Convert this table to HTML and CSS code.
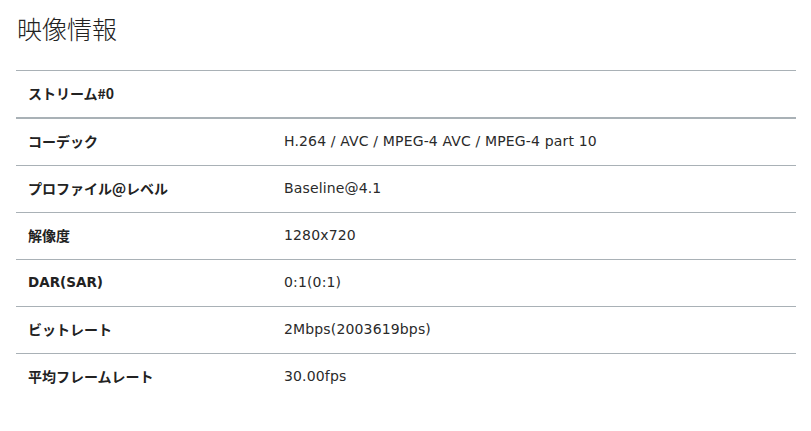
FILE: index.html
```html
<!DOCTYPE html>
<html lang="ja">
<head>
<meta charset="utf-8">
<link rel="stylesheet" href="styles.css">
</head>
<body>
<div class="page">
  <h1 class="title">映像情報</h1>
  <table class="info">
    <colgroup><col class="c-label"><col class="c-value"></colgroup>
    <tbody>
      <tr class="head"><th colspan="2">ストリーム#0</th></tr>
      <tr><th>コーデック</th><td>H.264 / AVC / MPEG-4 AVC / MPEG-4 part 10</td></tr>
      <tr><th>プロファイル@レベル</th><td>Baseline@4.1</td></tr>
      <tr><th>解像度</th><td>1280x720</td></tr>
      <tr><th class="lat">DAR(SAR)</th><td>0:1(0:1)</td></tr>
      <tr><th>ビットレート</th><td>2Mbps(2003619bps)</td></tr>
      <tr class="last"><th>平均フレームレート</th><td>30.00fps</td></tr>
    </tbody>
  </table>
</div>
</body>
</html>
```
FILE: styles.css
```css
html, body {
  margin: 0;
  padding: 0;
  background: #ffffff;
}
.page {
  padding: 0 15px 0 16px;
  font-family: "DejaVu Sans", "Noto Sans CJK JP", sans-serif;
  color: #222222;
}
.title {
  margin: 12px 0 26px 1px;
  font-family: "Noto Sans CJK JP", sans-serif;
  font-size: 25px;
  line-height: 32px;
  font-weight: 300;
  color: #222222;
}
.info {
  width: 100%;
  table-layout: fixed;
  border-collapse: collapse;
  border-top: 1px solid #a9b1b6;
}
.c-label {
  width: 256px;
}
.info th, .info td {
  padding: 12px 12px 14px;
  font-size: 14px;
  line-height: 20px;
  text-align: left;
  vertical-align: middle;
  border-bottom: 1px solid #a9b1b6;
}
.info th {
  font-weight: 700;
  font-family: "Noto Sans CJK JP", sans-serif;
}
.info th.lat {
  font-family: "DejaVu Sans", sans-serif;
  font-size: 13.5px;
}
.info td {
  font-weight: 400;
  letter-spacing: 0.15px;
  color: #2a2a2a;
}
.info tr.head th {
  border-bottom: 2px solid #a9b1b6;
}
.info tr.last th, .info tr.last td {
  border-bottom: none;
}
```
